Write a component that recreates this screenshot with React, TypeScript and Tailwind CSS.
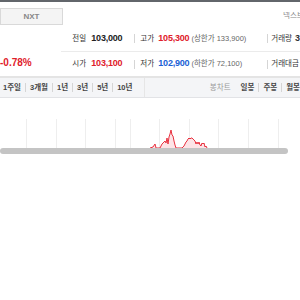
import React from "react";

const font = { fontFamily: '"Liberation Sans", "Noto Sans CJK KR", sans-serif' };

function Sep() {
  return <span className="w-px h-[9px] bg-[#d5d5d5]" />;
}

export default function App() {
  const gridX = [26, 56, 85, 115, 130, 159, 189, 218, 248, 278];
  const pts: [number, number][] = [
    [150, 50], [153, 49], [155, 46], [156, 50], [160, 50], [162, 46], [164, 44], [165, 43], [166, 45], [167, 40],
    [168, 46], [169, 39], [170, 36], [171, 32], [172, 37], [173, 38], [174, 43], [175, 47], [176, 50],
    [182, 50], [184, 48], [186, 44], [187, 43], [188, 41], [189, 40], [190, 41], [191, 40], [192, 40], [193, 41],
    [194, 42], [195, 43], [196, 46], [197, 44], [198, 46], [199, 44], [200, 47], [201, 48], [202, 45], [203, 46],
    [204, 45], [205, 49], [206, 48], [208, 52],
  ];
  const line = pts.map((p) => p.join(",")).join(" ");
  const area = `150,60 ${line} 208,60`;

  return (
    <div className="w-[300px] h-[300px] bg-white overflow-hidden text-[#333]" style={font}>
      <div className="h-[2px] bg-[#62666b]" />
      {/* tab row */}
      <div className="flex h-[24px] items-start">
        <div className="mt-[6px] w-[63px] h-[17px] border border-[#d9d9d9] bg-[#f4f4f4] flex items-center justify-center text-[8px] font-bold text-[#888]">
          NXT
        </div>
        <div className="ml-auto mt-[10px] w-[17px] overflow-hidden whitespace-nowrap text-[7.5px] text-[#888] leading-none">
          넥스트레이드
        </div>
      </div>
      {/* info */}
      <div className="flex h-[52px] border-b-2 border-[#e4e4e4]">
        <div className="w-[64px] flex items-end pb-[8px]">
          <span className="text-[10px] font-bold text-[#e0202a] leading-none">-0.78%</span>
        </div>
        <div className="flex-1 flex flex-col">
          <div className="h-[26px] flex items-center border-b border-[#ebebeb] whitespace-nowrap">
            <div className="w-[73px] pl-[11px] flex items-center">
              <span className="w-[19px] text-[7.5px]">전일</span>
              <span className="text-[9px] font-bold tracking-[-0.2px] text-[#222]">103,000</span>
            </div>
            <Sep />
            <div className="w-[132px] pl-[5px] flex items-center">
              <span className="w-[18px] text-[7.5px]">고가</span>
              <span className="text-[9px] font-bold tracking-[-0.2px] text-[#e0202a]">105,300</span>
              <span className="ml-[2px] text-[7.5px] text-[#666]">(상한가 133,900)</span>
            </div>
            <Sep />
            <div className="pl-[3px] flex items-center">
              <span className="text-[7.5px]">거래량</span>
              <span className="ml-[3px] text-[9px] font-bold">3</span>
            </div>
          </div>
          <div className="flex-1 flex items-center whitespace-nowrap">
            <div className="w-[73px] pl-[11px] flex items-center">
              <span className="w-[19px] text-[7.5px]">시가</span>
              <span className="text-[9px] font-bold tracking-[-0.2px] text-[#e0202a]">103,100</span>
            </div>
            <Sep />
            <div className="w-[132px] pl-[5px] flex items-center">
              <span className="w-[18px] text-[7.5px]">저가</span>
              <span className="text-[9px] font-bold tracking-[-0.2px] text-[#1a5fd6]">102,900</span>
              <span className="ml-[2px] text-[7.5px] text-[#666]">(하한가 72,100)</span>
            </div>
            <Sep />
            <div className="pl-[3px] flex items-center">
              <span className="text-[7.5px]">거래대금</span>
            </div>
          </div>
        </div>
      </div>
      {/* period row */}
      <div className="h-[20px] bg-[#f4f5f7] border-b border-[#e2e3e6] flex items-center whitespace-nowrap text-[7.5px] font-bold text-[#444]">
        <div className="w-[150px] pl-[3px] flex items-center gap-[4px] border-r border-[#e6e6e6] h-full">
          <span>1주일</span>
          <Sep />
          <span>3개월</span>
          <Sep />
          <span>1년</span>
          <Sep />
          <span>3년</span>
          <Sep />
          <span>5년</span>
          <Sep />
          <span>10년</span>
        </div>
        <div className="flex-1 flex items-center gap-[4px] pl-[65px]">
          <span className="font-normal text-[#999] mr-[6px]">봉차트</span>
          <span>일봉</span>
          <Sep />
          <span>주봉</span>
          <Sep />
          <span>월봉</span>
        </div>
      </div>
      {/* chart */}
      <div className="h-[50px] overflow-hidden">
        <svg width="300" height="50" viewBox="0 0 300 50">
          {gridX.map((x) => (
            <line key={x} x1={x + 0.5} x2={x + 0.5} y1={21} y2={50} stroke="#eeeeee" strokeWidth={1} />
          ))}
          <polygon points={area} fill="#fde4e7" />
          <polyline points={line} fill="none" stroke="#e8313f" strokeWidth={1} />
        </svg>
      </div>
      <div className="h-[6px] w-[288px] rounded-full bg-[#c4c4c4]" />
    </div>
  );
}
